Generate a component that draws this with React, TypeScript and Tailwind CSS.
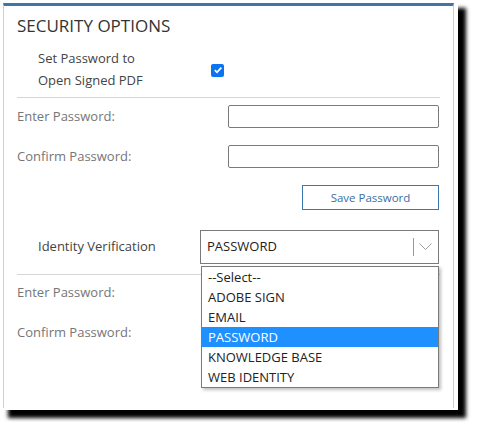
import React from "react";

const font = { fontFamily: '"Open Sans", "Noto Sans", sans-serif' };

function Row({ label, top }: { label: string; top: string }) {
  return (
    <div className={`flex h-[23px] items-center justify-between ${top}`}>
      <span className="text-[13px] text-[#767676]">{label}</span>
      <div className="h-[23px] w-[211px] rounded-[2px] border border-[#7a7a7a] bg-white" />
    </div>
  );
}

export default function App() {
  const items = ["--Select--", "ADOBE SIGN", "EMAIL", "PASSWORD", "KNOWLEDGE BASE", "WEB IDENTITY"];
  return (
    <div className="h-[422px] w-[500px] bg-white" style={font}>
      <div className="h-[410px] w-[458px] bg-white pl-[3px] pt-[3px] shadow-[8px_8px_4px_rgba(0,0,0,1)]">
        <div className="flex h-[405px] w-[451px] flex-col border-x border-t-[3px] border-x-[#d0d0d0] border-t-[#4473a8] pl-[13px] pr-[14px]">
          <div className="mt-[8px] h-[24px] text-[17px] leading-[24px] text-[#333]">SECURITY OPTIONS</div>

          <div className="mt-[9px] flex h-[44px] items-center">
            <div className="ml-[21px] w-[173px] text-[13px] leading-[22px] text-[#444]">
              Set Password to
              <br />
              Open Signed PDF
            </div>
            <div className="mt-[2px] flex h-[13px] w-[13px] items-center justify-center rounded-[2px] bg-[#0b74f0]">
              <svg width="10" height="10" viewBox="0 0 10 10">
                <path d="M1.8 5.2 L4 7.3 L8.3 2.6" fill="none" stroke="white" strokeWidth="1.8" />
              </svg>
            </div>
          </div>

          <div className="mt-[6px] h-px w-[423px] bg-[#d6d6d6]" />

          <Row label="Enter Password:" top="mt-[7px]" />
          <Row label="Confirm Password:" top="mt-[17px]" />

          <div className="mt-[17px] flex h-[25px] w-[137px] items-center justify-center self-end border border-[#3b76ae] text-[11.5px] text-[#3a6ea5]">
            Save Password
          </div>

          <div className="mt-[20px] flex h-[34px] items-center justify-between">
            <span className="ml-[21px] text-[13px] text-[#444]">Identity Verification</span>
            <div className="relative h-[34px] w-[239px] border border-[#7a7a7a] bg-white">
              <div className="flex h-full items-center pl-[6px] text-[13px] text-[#222]">PASSWORD</div>
              <div className="absolute right-[24px] top-[7px] h-[18px] w-px bg-[#9a9a9a]" />
              <svg className="absolute right-[6px] top-[12px]" width="13" height="8" viewBox="0 0 13 8">
                <path d="M0.5 0.5 L6.5 6.5 L12.5 0.5" fill="none" stroke="#a0a0a0" strokeWidth="1" />
              </svg>
              <div className="absolute left-[0px] top-[35px] z-10 w-[238px] border border-[#7a7a7a] bg-white shadow-[2px_2px_3px_rgba(0,0,0,0.25)]">
                {items.map((it) => (
                  <div
                    key={it}
                    className={`h-[20px] pl-[6px] text-[13px] leading-[20px] ${
                      it === "PASSWORD" ? "bg-[#1e90ff] text-white" : "text-[#222]"
                    }`}
                  >
                    {it}
                  </div>
                ))}
              </div>
            </div>
          </div>

          <div className="mt-[10px] h-px w-[423px] bg-[#d6d6d6]" />

          <Row label="Enter Password:" top="mt-[6px]" />
          <Row label="Confirm Password:" top="mt-[17px]" />

          <div className="mt-[18px] flex h-[25px] w-[137px] items-center justify-center self-end border border-[#3b76ae] text-[11.5px] text-[#3a6ea5]">
            Save Password
          </div>
        </div>
      </div>
    </div>
  );
}
